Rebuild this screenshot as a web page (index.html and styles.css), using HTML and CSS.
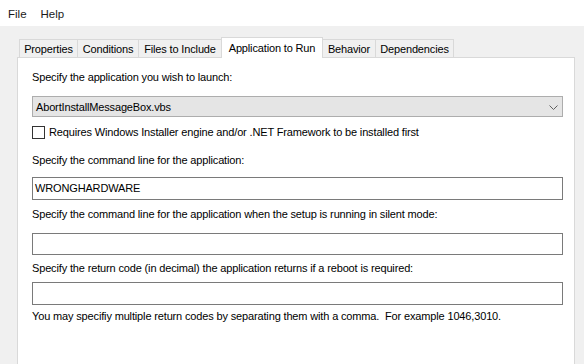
FILE: index.html
```html
<!DOCTYPE html>
<html>
<head>
<meta charset="utf-8">
<link rel="stylesheet" href="styles.css">
</head>
<body>
<div class="menubar">
  <span class="menu-item">File</span>
  <span class="menu-item">Help</span>
</div>
<div class="client">
  <div class="tabstrip">
    <div class="tab t1">Properties</div>
    <div class="tab t2">Conditions</div>
    <div class="tab t3">Files to Include</div>
    <div class="tab active t4">Application to Run</div>
    <div class="tab t5">Behavior</div>
    <div class="tab t6">Dependencies</div>
  </div>
  <div class="panel">
    <div class="label l1">Specify the application you wish to launch:</div>
    <div class="combo">
      <span class="combo-text">AbortInstallMessageBox.vbs</span>
      <svg class="chevron" width="9" height="5" viewBox="0 0 9 5"><polyline points="0.5,0.5 4.5,4.5 8.5,0.5" fill="none" stroke="#606060" stroke-width="1"/></svg>
    </div>
    <div class="check-row">
      <span class="checkbox"></span>
      <span class="check-label">Requires Windows Installer engine and/or .NET Framework to be installed first</span>
    </div>
    <div class="label l2">Specify the command line for the application:</div>
    <div class="textbox tb1">WRONGHARDWARE</div>
    <div class="label l3">Specify the command line for the application when the setup is running in silent mode:</div>
    <div class="textbox tb2"></div>
    <div class="label l4">Specify the return code (in decimal) the application returns if a reboot is required:</div>
    <div class="textbox tb3"></div>
    <div class="label help">You may specifiy multiple return codes by separating them with a comma.&nbsp; For example 1046,3010.</div>
  </div>
</div>
</body>
</html>
```

FILE: styles.css
```css
html, body {
  margin: 0;
  padding: 0;
  background: #f0f0f0;
  height: 364px;
  overflow: hidden;
}
body {
  font-family: "Liberation Sans", Arial, sans-serif;
  font-size: 11px;
  letter-spacing: -0.15px;
  color: #000;
}
.menubar {
  height: 26px;
  background: #fff;
  display: flex;
  align-items: center;
  padding-left: 8px;
  gap: 14px;
  box-sizing: border-box;
  padding-top: 2px;
  font-size: 11.5px;
  letter-spacing: 0;
  color: #1a1a1a;
}
.client {
  padding: 11px 9px 0 17px;
}
.tabstrip {
  display: flex;
  align-items: flex-end;
  padding-left: 2px;
  height: 20px;
  position: relative;
  z-index: 2;
}
.tab {
  height: 18px;
  box-sizing: border-box;
  border: 1px solid #d9d9d9;
  border-bottom: none;
  border-right: none;
  background: #f0f0f0;
  display: flex;
  align-items: center;
  justify-content: center;
  line-height: 14px;
  white-space: nowrap;
  padding-top: 1px;
}
.tab.t6 { border-right: 1px solid #d9d9d9; }
.tab.active {
  height: 21px;
  margin-bottom: -1px;
  background: #fff;
  border-right: 1px solid #d9d9d9;
  align-items: flex-start;
  padding-top: 3px;
  margin-right: -1px;
}
.t1 { width: 58px; }
.t2 { width: 61px; }
.t3 { width: 83px; }
.t4 { width: 102px; }
.t5 { width: 53px; }
.t6 { width: 79px; }
.panel {
  background: #fff;
  border: 1px solid #d9d9d9;
  height: 320px;
  box-sizing: border-box;
  padding: 12px 11px 0 14px;
  display: flex;
  flex-direction: column;
}
.label {
  line-height: 14px;
  height: 14px;
  white-space: nowrap;
}
.combo {
  margin-top: 12px;
  height: 21px;
  box-sizing: border-box;
  border: 1px solid #adadad;
  background: #e5e5e5;
  display: flex;
  align-items: center;
  justify-content: space-between;
  padding: 0 3px 0 3px;
}
.chevron {
  margin-right: 1px;
  margin-top: 1px;
}
.check-row {
  margin-top: 8px;
  height: 14px;
  display: flex;
  align-items: center;
  gap: 4px;
  line-height: 14px;
}
.checkbox {
  width: 13px;
  height: 13px;
  box-sizing: border-box;
  border: 1px solid #333;
  background: #fff;
}
.l2 { margin-top: 14px; }
.textbox {
  height: 23px;
  box-sizing: border-box;
  border: 1px solid #7a7a7a;
  background: #fff;
  padding: 3px 2px 0 2px;
  line-height: 14px;
}
.tb1 { margin-top: 10px; }
.l3 { margin-top: 7px; }
.tb2 { margin-top: 12px; height: 22px; }
.l4 { margin-top: 6px; }
.tb3 { margin-top: 7px; }
.help { margin-top: 4px; }
```
